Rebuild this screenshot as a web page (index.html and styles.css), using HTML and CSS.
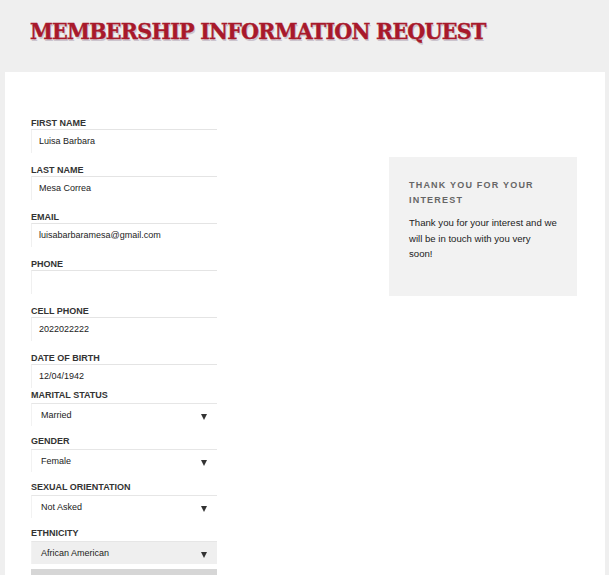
FILE: index.html
```html
<!DOCTYPE html>
<html lang="en">
<head>
<meta charset="utf-8">
<title>Membership Information Request</title>
<link rel="stylesheet" href="styles.css">
</head>
<body>
<header class="page-header">
  <h1 class="page-title">MEMBERSHIP INFORMATION REQUEST</h1>
</header>
<main class="panel">
  <form class="form">
    <div class="field">
      <label class="label">FIRST NAME</label>
      <div class="input">Luisa Barbara</div>
    </div>
    <div class="field">
      <label class="label">LAST NAME</label>
      <div class="input">Mesa Correa</div>
    </div>
    <div class="field">
      <label class="label">EMAIL</label>
      <div class="input">luisabarbaramesa@gmail.com</div>
    </div>
    <div class="field">
      <label class="label">PHONE</label>
      <div class="input"></div>
    </div>
    <div class="field">
      <label class="label">CELL PHONE</label>
      <div class="input">2022022222</div>
    </div>
    <div class="field field-tight">
      <label class="label">DATE OF BIRTH</label>
      <div class="input">12/04/1942</div>
    </div>
    <div class="field field-select">
      <label class="label">MARITAL STATUS</label>
      <div class="select"><span>Married</span><span class="arrow"></span></div>
    </div>
    <div class="field field-select">
      <label class="label">GENDER</label>
      <div class="select"><span>Female</span><span class="arrow"></span></div>
    </div>
    <div class="field field-select">
      <label class="label">SEXUAL ORIENTATION</label>
      <div class="select"><span>Not Asked</span><span class="arrow"></span></div>
    </div>
    <div class="field field-select field-last">
      <label class="label">ETHNICITY</label>
      <div class="select select-active"><span>African American</span><span class="arrow"></span></div>
    </div>
    <div class="next-bar"></div>
  </form>
  <aside class="thanks">
    <h2 class="thanks-title">THANK YOU FOR YOUR INTEREST</h2>
    <p class="thanks-text">Thank you for your interest and we will be in touch with you very<br>soon!</p>
  </aside>
</main>
</body>
</html>
```
FILE: styles.css
```css
html, body {
  margin: 0;
  padding: 0;
}
body {
  background: #efefef;
  font-family: "Liberation Sans", Arial, sans-serif;
  color: #222;
}
.page-header {
  height: 72px;
  padding: 0 0 0 30px;
  box-sizing: border-box;
}
.page-title {
  margin: 0;
  padding-top: 16px;
  font-family: "DejaVu Serif Condensed", "DejaVu Serif", serif;
  font-stretch: condensed;
  font-weight: bold;
  font-size: 23px;
  line-height: 30px;
  color: #a8192b;
  text-shadow: 1px 2px 0 #cbc4cd;
  letter-spacing: -0.8px;
  -webkit-text-stroke: 0.4px #a8192b;
}
.panel {
  margin: 0 4px 0 5px;
  background: #fff;
  padding: 45px 28px 40px 26px;
  display: grid;
  grid-template-columns: 186px 188px;
  justify-content: space-between;
  align-items: start;
}
.form {
  display: flex;
  flex-direction: column;
}
.field {
  display: flex;
  flex-direction: column;
  margin-bottom: 11px;
}
.field-tight {
  margin-bottom: 1px;
}
.field-select {
  margin-bottom: 9px;
}
.field-last {
  margin-bottom: 5px;
}
.label {
  font-size: 9px;
  font-weight: bold;
  line-height: 12px;
  color: #333;
}
.input {
  height: 24px;
  box-sizing: border-box;
  border-top: 1px solid #e4e4e4;
  border-left: 1px solid #f0f0f0;
  padding: 0 0 0 7px;
  font-size: 9px;
  line-height: 23px;
  color: #222;
}
.select {
  height: 23px;
  margin-top: 2px;
  box-sizing: border-box;
  border-top: 1px solid #e6e6e6;
  border-left: 1px solid #f2f2f2;
  padding: 0 10px 0 9px;
  display: flex;
  justify-content: space-between;
  align-items: center;
  font-size: 9px;
  color: #222;
}
.select-active {
  background: #efefef;
}
.arrow {
  width: 0;
  height: 0;
  border-left: 3px solid transparent;
  border-right: 3px solid transparent;
  border-top: 6px solid #333;
  margin-top: 3px;
}
.next-bar {
  height: 8px;
  background: #d6d6d6;
}
.thanks {
  margin-top: 40px;
  background: #f2f2f2;
  padding: 21px 20px 34px 20px;
  min-height: 139px;
  box-sizing: border-box;
}
.thanks-title {
  margin: 0 0 8px 0;
  font-size: 9px;
  font-weight: bold;
  letter-spacing: 1.2px;
  line-height: 14.5px;
  color: #666;
}
.thanks-text {
  margin: 0;
  font-size: 9.6px;
  line-height: 15.5px;
  color: #222;
}
```
